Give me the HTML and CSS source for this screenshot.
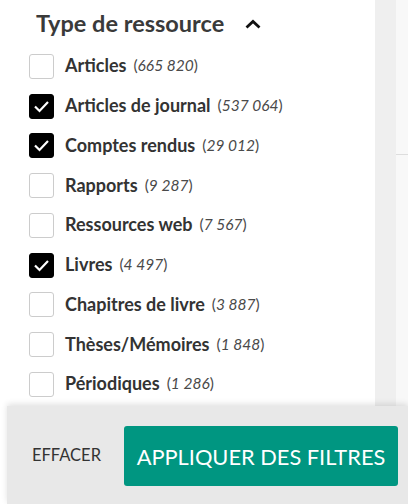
FILE: index.html
```html
<!DOCTYPE html>
<html lang="fr">
<head>
    <meta charset="UTF-8">
    <meta name="viewport" content="width=device-width, initial-scale=1.0">
    <title>Filtres</title>
    <link rel="stylesheet" href="styles.css">
</head>
<body>
    <div class="layout">
        <div class="panel">
            <h2 class="facet-title">Type de ressource
                <svg class="chevron" width="16" height="10" viewBox="0 0 16 10"><path d="M1.5 8.5 L8 2.5 L14.5 8.5" fill="none" stroke="#111" stroke-width="2.8"/></svg>
            </h2>
            <ul class="facet-list">
                <li><span class="box"></span><span class="label">Articles</span><span class="count">(<i>665 820</i>)</span></li>
                <li><span class="box checked"><svg width="25" height="25" viewBox="0 0 25 25"><path d="M6 12.5 L10.5 17 L19 8" fill="none" stroke="#fff" stroke-width="2.2"/></svg></span><span class="label">Articles de journal</span><span class="count">(<i>537 064</i>)</span></li>
                <li><span class="box checked"><svg width="25" height="25" viewBox="0 0 25 25"><path d="M6 12.5 L10.5 17 L19 8" fill="none" stroke="#fff" stroke-width="2.2"/></svg></span><span class="label">Comptes rendus</span><span class="count">(<i>29 012</i>)</span></li>
                <li><span class="box"></span><span class="label">Rapports</span><span class="count">(<i>9 287</i>)</span></li>
                <li><span class="box"></span><span class="label">Ressources web</span><span class="count">(<i>7 567</i>)</span></li>
                <li><span class="box checked"><svg width="25" height="25" viewBox="0 0 25 25"><path d="M6 12.5 L10.5 17 L19 8" fill="none" stroke="#fff" stroke-width="2.2"/></svg></span><span class="label">Livres</span><span class="count">(<i>4 497</i>)</span></li>
                <li><span class="box"></span><span class="label">Chapitres de livre</span><span class="count">(<i>3 887</i>)</span></li>
                <li><span class="box"></span><span class="label">Thèses/Mémoires</span><span class="count">(<i>1 848</i>)</span></li>
                <li><span class="box"></span><span class="label">Périodiques</span><span class="count">(<i>1 286</i>)</span></li>
            </ul>
        </div>
        <div class="gutter"></div>
        <div class="aside"><div class="aside-top"></div></div>
    </div>

    <div class="footer">
        <button class="btn-clear">EFFACER</button>
        <button class="btn-apply">APPLIQUER DES FILTRES</button>
    </div>
</body>
</html>
```

FILE: styles.css
```css
body {
    margin: 0;
    font-family: Lato, "Noto Sans", sans-serif;
    color: #333;
    width: 408px;
    height: 504px;
    overflow: hidden;
    position: relative;
}
.layout {
    display: flex;
    height: 504px;
}
.panel {
    width: 375px;
    background-color: #fff;
}
.gutter {
    width: 21px;
    background-color: #efefef;
}
.aside {
    flex: 1;
    background-color: #f8f8f8;
}
.aside-top {
    height: 154px;
    border-bottom: 1px solid #ddd;
}
.facet-title {
    margin: 0;
    padding: 9px 0 0 36px;
    font-size: 23.5px;
    line-height: 28px;
    font-weight: 700;
    color: #3a3a3a;
}
.chevron {
    margin-left: 15px;
    vertical-align: 3px;
}
.facet-list {
    list-style: none;
    margin: 0;
    padding: 9.6px 0 0 29px;
}
.facet-list li {
    display: flex;
    align-items: center;
    height: 39.75px;
}
.box {
    width: 25px;
    height: 25px;
    box-sizing: border-box;
    border: 1px solid #ccc;
    border-radius: 3px;
    margin-right: 11px;
    flex-shrink: 0;
}
.box.checked {
    background-color: #000;
    border-color: #000;
}
.box svg {
    display: block;
    margin: -1px;
}
.label {
    font-size: 18px;
    font-weight: 700;
    color: #333;
    position: relative;
    top: -1px;
}
.count {
    font-size: 15.5px;
    color: #4a4a4a;
    margin-left: 7px;
    position: relative;
    top: -1px;
}
.count i {
    font-style: italic;
}
.footer {
    position: absolute;
    left: 7px;
    right: 0;
    top: 406px;
    bottom: 0;
    background-color: #e8e8e8;
    box-shadow: 0 -2px 6px rgba(0, 0, 0, 0.12);
    display: flex;
    align-items: center;
    justify-content: space-between;
    padding: 0 10px 0 25px;
}
.btn-clear {
    background: none;
    border: none;
    padding: 0;
    font-family: inherit;
    font-size: 16.5px;
    color: #333;
}
.btn-apply {
    background-color: #009681;
    border: none;
    border-radius: 3px;
    color: #fff;
    font-family: inherit;
    font-size: 21.8px;
    width: 274px;
    height: 60px;
    margin-top: 2px;
}
```
